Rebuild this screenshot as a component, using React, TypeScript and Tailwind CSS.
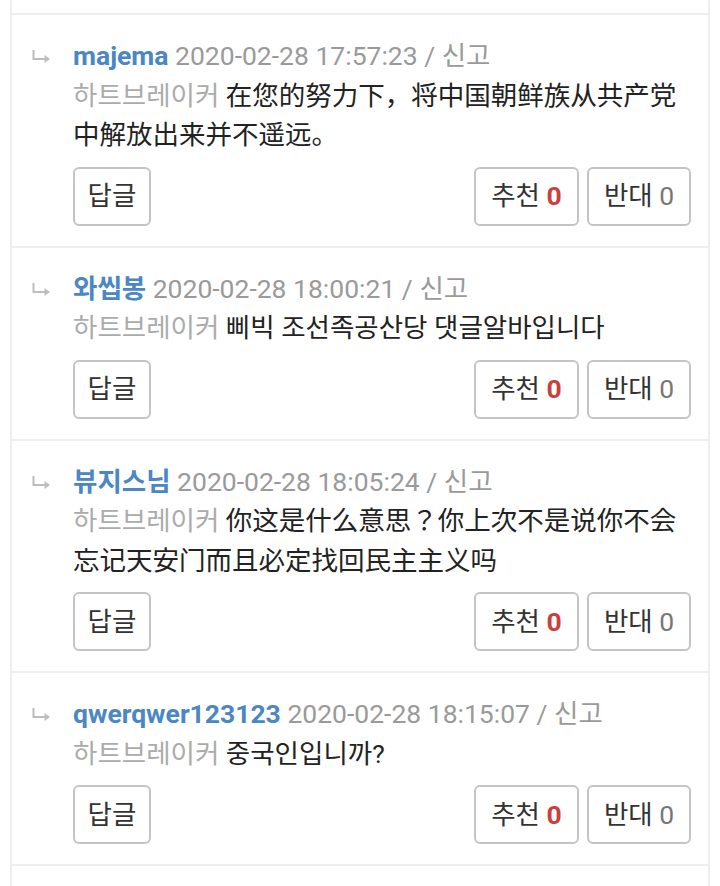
import React from 'react';

type Comment = {
  user: string;
  date: string;
  target: string;
  body: string;
};

const comments: Comment[] = [
  {
    user: 'majema',
    date: '2020-02-28 17:57:23',
    target: '하트브레이커',
    body: '在您的努力下，将中国朝鲜族从共产党中解放出来并不遥远。',
  },
  {
    user: '와씹봉',
    date: '2020-02-28 18:00:21',
    target: '하트브레이커',
    body: '삐빅 조선족공산당 댓글알바입니다',
  },
  {
    user: '뷰지스님',
    date: '2020-02-28 18:05:24',
    target: '하트브레이커',
    body: '你这是什么意思？你上次不是说你不会忘记天安门而且必定找回民主主义吗',
  },
  {
    user: 'qwerqwer123123',
    date: '2020-02-28 18:15:07',
    target: '하트브레이커',
    body: '중국인입니까?',
  },
];

function ReplyArrow() {
  return (
    <svg width="18" height="15" viewBox="0 0 18 15">
      <path d="M1.5 0 V9 H13" fill="none" stroke="#bdbdbd" strokeWidth="2" />
      <path d="M12.5 5 L18 9 L12.5 13 Z" fill="#bdbdbd" />
    </svg>
  );
}

function CommentRow({ c }: { c: Comment }) {
  return (
    <div className="relative border-b-2 border-[#eeeeee] pl-[61px] pr-[17px] pt-[21px] pb-[20px]">
      {/* reply marker */}
      <div className="absolute left-[20px] top-[35px]">
        <ReplyArrow />
      </div>

      <div className="leading-[39.5px]">
        <span className="font-bold text-[#4a87c4]">{c.user}</span>{' '}
        <span className="text-[#9a9a9a]">{c.date} / 신고</span>
      </div>
      <div className="leading-[39.5px] text-[#222222]">
        <span className="text-[#ababab]">{c.target}</span> {c.body}
      </div>

      <div className="mt-[12px] flex items-center justify-between">
        <button className="h-[59px] w-[78px] rounded-[6px] border-2 border-[#c4c4c4] bg-white text-[#333333]">
          답글
        </button>
        <div className="flex gap-2">
          <button className="h-[59px] w-[105px] rounded-[6px] border-2 border-[#c4c4c4] bg-white text-[#333333]">
            추천 <span className="font-bold text-[#c9403e]">0</span>
          </button>
          <button className="h-[59px] w-[104px] rounded-[6px] border-2 border-[#c4c4c4] bg-white text-[#333333]">
            반대 <span className="text-[#777777]">0</span>
          </button>
        </div>
      </div>
    </div>
  );
}

export default function App() {
  return (
    <div
      className="min-h-[886px] bg-white px-[10px] text-[26.5px]"
      style={{ fontFamily: 'Roboto, "Noto Sans CJK KR", "Noto Sans", sans-serif' }}
    >
      <div className="border-x-2 border-[#eeeeee]">
        <div className="h-[15px] border-b-2 border-[#eeeeee]" />
        {comments.map((c, i) => (
          <CommentRow key={i} c={c} />
        ))}
        <div className="h-[40px]" />
      </div>
    </div>
  );
}
